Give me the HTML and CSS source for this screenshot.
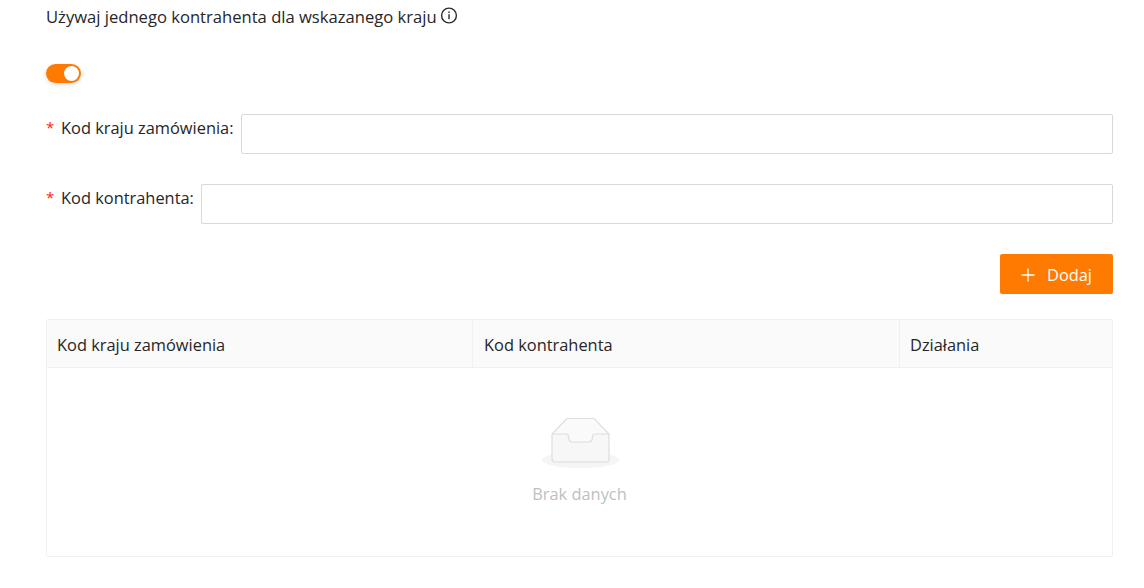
FILE: index.html
```html
<!DOCTYPE html>
<html lang="pl">
<head>
<meta charset="utf-8">
<title>Kontrahent</title>
<link rel="stylesheet" href="styles.css">
</head>
<body>
<div class="page">
  <div class="title-row">
    <span>Używaj jednego kontrahenta dla wskazanego kraju</span>
    <svg class="info" viewBox="0 0 18 18" width="18" height="18" aria-hidden="true">
      <circle cx="9" cy="8.500" r="7.400" fill="none" stroke="#2b2b2b" stroke-width="1.400"/>
      <rect x="8.300" y="7.200" width="1.400" height="5" fill="#2b2b2b"/>
      <rect x="8.300" y="4.500" width="1.400" height="1.500" fill="#2b2b2b"/>
    </svg>
  </div>
  <div class="switch-row"><button class="switch" type="button" aria-label="Przełącz"><span class="knob"></span></button></div>
  <div class="field">
    <label class="label"><span class="star">*</span>Kod kraju zamówienia:</label>
    <input class="input" type="text">
  </div>
  <div class="field">
    <label class="label"><span class="star">*</span>Kod kontrahenta:</label>
    <input class="input" type="text">
  </div>
  <div class="actions">
    <button class="add" type="button">
      <svg viewBox="0 0 16 16" width="16" height="16" aria-hidden="true"><path d="M8 1.500v13M1.500 8h13" stroke="#fff" stroke-width="1.300" fill="none"/></svg>
      <span>Dodaj</span>
    </button>
  </div>
  <div class="table">
    <div class="thead">
      <div class="th">Kod kraju zamówienia</div>
      <div class="th">Kod kontrahenta</div>
      <div class="th">Działania</div>
    </div>
    <div class="empty">
      <svg class="empty-icon" viewBox="0 0 80 52" width="80" height="52" aria-hidden="true">
        <ellipse cx="40.500" cy="43" rx="39" ry="8" fill="#f5f5f5"/>
        <path d="M12 17 L27 1.500 H54 L69 17 V42 a3 3 0 0 1 -3 3 H15 a3 3 0 0 1 -3 -3 Z" fill="#fafafa"/>
        <path d="M12 17 H26 c2 0 2.500 1.500 2.500 3 c0 3 1.500 5 4 5 H48.500 c2.500 0 4 -2 4 -5 c0 -1.500 .5 -3 2.500 -3 H69 V42 a3 3 0 0 1 -3 3 H15 a3 3 0 0 1 -3 -3 Z" fill="#f7f7f7"/>
        <path d="M12 17 L27 1.500 H54 L69 17 V42 a3 3 0 0 1 -3 3 H15 a3 3 0 0 1 -3 -3 Z M12 17 H26 c2 0 2.500 1.500 2.500 3 c0 3 1.500 5 4 5 H48.500 c2.500 0 4 -2 4 -5 c0 -1.500 .5 -3 2.500 -3 H69" fill="none" stroke="#dedede" stroke-width="1.200"/>
      </svg>
      <div class="empty-text">Brak danych</div>
    </div>
  </div>
</div>
</body>
</html>
```
FILE: styles.css
```css
* { box-sizing: border-box; }
html, body { margin: 0; padding: 0; background: #fff; }
body {
  font-family: "Open Sans", "Noto Sans", "Liberation Sans", sans-serif;
  font-size: 16.4px;
  color: #262626;
}
.page { padding: 5px 31px 0 46px; }
.title-row { display: flex; align-items: center; gap: 3px; height: 22px; font-size: 16.6px; }
.info { display: block; }
.switch-row { margin-top: 37px; height: 19px; }
.switch {
  display: block; width: 35px; height: 19px; padding: 0; border: 0;
  border-radius: 10px; background: #ff7a00; position: relative;
  box-shadow: 0 2px 4px rgba(0,0,0,.12);
}
.knob {
  position: absolute; top: 2px; right: 2px; width: 15px; height: 15px;
  border-radius: 50%; background: #fff;
}
.field { display: flex; align-items: center; height: 40px; margin-bottom: 30px; }
.switch-row + .field { margin-top: 31px; }
.label { display: flex; align-items: center; flex: none; margin-right: 7px; padding-bottom: 13px; }
.star { color: #ff1a1a; width: 15px; font-size: 15px; padding-bottom: 1px; }
.input {
  flex: 1; min-width: 0; height: 40px; border: 1px solid #d9d9d9;
  border-radius: 2px; background: #fff; outline: none;
}
.actions { display: flex; justify-content: flex-end; }
.add {
  width: 113px; height: 40px; border: 0; border-radius: 2px; background: #ff7a00; color: #fff;
  font: inherit; display: flex; align-items: center; justify-content: center; gap: 11px; padding: 0 0 0 2px;
}
.add svg { margin-top: 1px; margin-left: -3px; }
.table { margin-top: 25px; height: 238px; border: 1px solid #f0f0f0; border-radius: 2px; }
.thead { display: grid; grid-template-columns: 426px 427px 1fr; height: 48px; background: #fafafa; border-bottom: 1px solid #f0f0f0; }
.th { padding: 1px 10px 0; line-height: 47px; height: 47px; border-right: 1px solid #f0f0f0; }
.th:nth-child(2) { padding-left: 11px; }
.th:last-child { border-right: 0; }
.empty { display: flex; flex-direction: column; align-items: center; padding-top: 49px; }
.empty-icon { display: block; }
.empty-text { margin-top: 14px; color: #bfbfbf; line-height: 22px; }
```
